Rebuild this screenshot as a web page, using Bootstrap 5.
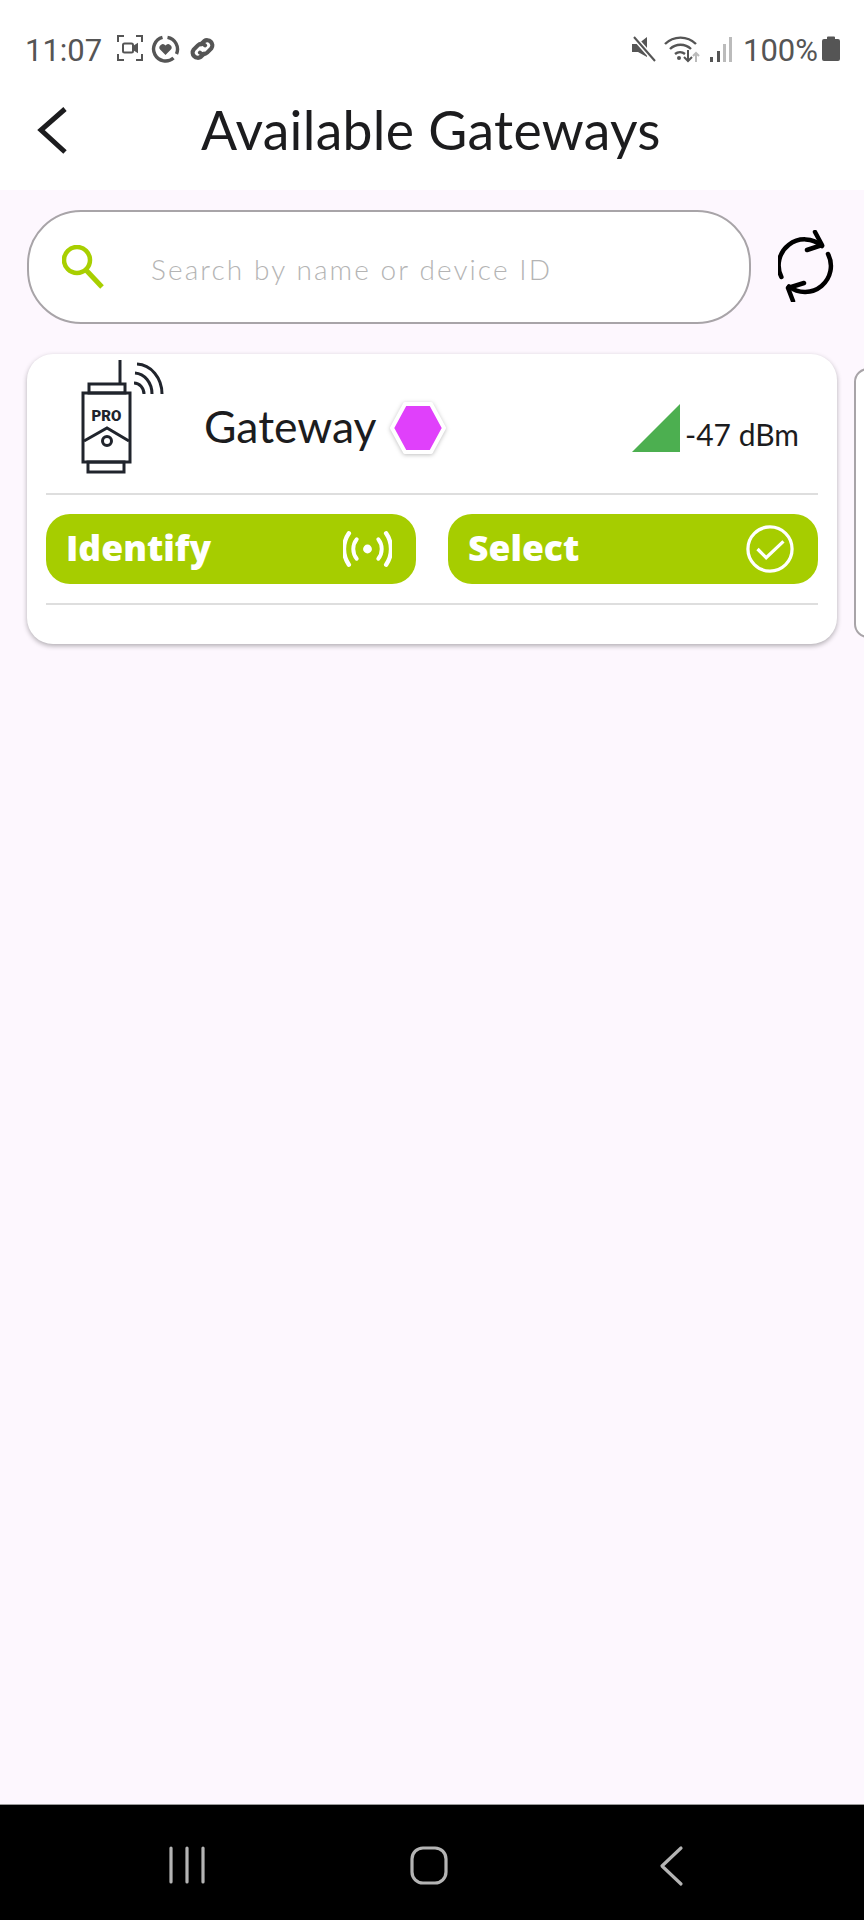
<!DOCTYPE html>
<html lang="en">
<head>
  <meta charset="UTF-8">
  <meta name="viewport" content="width=device-width, initial-scale=1.0">
  <title>Available Gateways</title>
  <link href="https://cdn.jsdelivr.net/npm/bootstrap@5.3.0/dist/css/bootstrap.min.css" rel="stylesheet">
  <style>
    html, body {
      height: 100%;
    }
    body {
      width: 864px;
      height: 1920px;
      overflow: hidden;
      background: #fdf7fe;
      font-family: "Lato", sans-serif;
      color: #1c1c1e;
    }
    .status-row {
      height: 76px;
      padding: 35px 24px 0 25px;
      font-family: "Roboto", sans-serif;
      font-size: 31px;
      color: #555;
      line-height: 1;
    }
    .title-row {
      height: 114px;
    }
    .title-text {
      font-size: 53.5px;
      font-weight: 400;
      margin: -8px 0 0 133px;
      letter-spacing: 0.3px;
    }
    .back-icon {
      margin-left: 36px;
      margin-top: -4px;
    }
    .search-row {
      padding: 20px 26px 0 27px;
    }
    .search-box {
      width: 724px;
      height: 114px;
      border: 2px solid #a8a4a8;
      border-radius: 54px;
      padding-left: 33px;
    }
    .search-input {
      border: 0;
      background: transparent;
      padding: 0;
      margin: 4px 0 0 47px;
      font-size: 28px;
      font-weight: 300;
      letter-spacing: 2.1px;
      box-shadow: none !important;
    }
    .search-input::placeholder {
      color: #b4b4b4;
      opacity: 1;
    }
    .refresh-icon {
      margin-top: -3px;
    }
    .card-strip {
      padding: 30px 0 12px 27px;
      overflow: hidden;
      gap: 17px;
    }
    .gw-card {
      flex: 0 0 810px;
      height: 290px;
      border: 0;
      border-radius: 26px;
      box-shadow: 0 2px 5px rgba(0, 0, 0, 0.3);
      padding: 0 19px;
    }
    .next-card {
      flex: 0 0 810px;
      height: 270px;
      margin-top: 14px;
      border: 2px solid #a8a4a8;
      border-radius: 14px;
    }
    .gw-top {
      height: 141px;
      border-bottom: 2px solid #dedede;
    }
    .gw-name {
      font-size: 44.5px;
      margin-left: 38px;
      margin-top: 6px;
    }
    .gw-hex {
      margin-left: 13px;
      margin-top: 8px;
      filter: drop-shadow(0 1px 2px rgba(0, 0, 0, 0.25));
    }
    .rssi-text {
      font-size: 30px;
      margin-left: 5px;
      margin-right: 19px;
      line-height: 1;
      padding-bottom: 3px;
    }
    .rssi-wrap {
      margin-top: 9px;
    }
    .gw-actions {
      height: 110px;
      border-bottom: 2px solid #dedede;
      gap: 32px;
    }
    .gw-btn {
      height: 70px;
      flex: 1 1 0;
      background: #a6cd00;
      border: 0;
      border-radius: 24px;
      color: #fff;
      font-family: "Open Sans", sans-serif;
      font-weight: 800;
      font-size: 35.5px;
      padding: 0 24px 0 20px;
      line-height: 1;
    }
    .gw-btn span {
      padding-bottom: 2px;
    }
    .gw-btn:hover, .gw-btn:active {
      background: #a6cd00 !important;
      color: #fff !important;
    }
    .sys-nav {
      height: 116px;
      background: #000;
      border-top: 1px solid #9a9a9a;
      margin-top: auto;
    }
  </style>
</head>
<body class="d-flex flex-column">

  <div class="status-row d-flex align-items-start bg-white">
    <span>11:07</span>
    <svg style="margin-left:15px" width="26" height="26" viewBox="0 0 26 26" fill="none" stroke="#555" stroke-width="2">
      <path d="M1 7V1h6M19 1h6v6M25 19v6h-6M7 25H1v-6"/>
      <rect x="6" y="8.5" width="10" height="9" rx="1.5"/>
      <path d="M16 12l4-2.5v7L16 14" fill="#555"/>
    </svg>
    <svg style="margin-left:8px" width="29" height="28" viewBox="0 0 28 28" fill="none" stroke="#555" stroke-width="3.4">
      <path d="M16 2.4A12 12 0 0 1 25 19M22 23A12 12 0 1 1 11 2.4"/>
      <path d="M14 20l-5.4-5.4a3.3 3.3 0 0 1 5.4-4 3.3 3.3 0 0 1 5.4 4z" fill="#555" stroke="none"/>
    </svg>
    <svg class="ms-2" width="29" height="28" viewBox="0 0 27 27" fill="none" stroke="#555" stroke-width="4" stroke-linecap="round">
      <path d="M12 9l3-3a5 5 0 0 1 7 7l-4 4a5 5 0 0 1-7 0"/>
      <path d="M15 18l-3 3a5 5 0 0 1-7-7l4-4a5 5 0 0 1 7 0"/>
    </svg>
    <svg class="ms-auto" width="26" height="28" viewBox="0 0 26 28">
      <path d="M1 9h6l9-7v20l-9-5H1z" fill="#555"/>
      <path d="M3 2l21 24" stroke="#fff" stroke-width="5"/>
      <path d="M3 2l21 24" stroke="#555" stroke-width="2"/>
    </svg>
    <svg style="margin-left:7px" width="36" height="28" viewBox="0 0 36 28" fill="none" stroke="#555" stroke-width="2.4">
      <path d="M1 9a22 22 0 0 1 31 0M6 14a15 15 0 0 1 21 0M11 19a8 8 0 0 1 10 0"/>
      <circle cx="15" cy="23" r="2" fill="#555" stroke="none"/>
      <path d="M24 15v11M20 22l4 4 4-4" stroke-width="2"/>
      <path d="M32 27V18M29 21l3-3 3 3" stroke="#bbb" stroke-width="2"/>
    </svg>
    <svg style="margin-left:9px" width="24" height="28" viewBox="0 0 24 28">
      <rect x="1" y="22" width="3" height="5" fill="#555"/>
      <rect x="8" y="16" width="3" height="11" fill="#555"/>
      <rect x="14" y="9" width="3" height="18" fill="#bbb"/>
      <rect x="20" y="2" width="3" height="25" fill="#bbb"/>
    </svg>
    <span style="margin-left:10px">100%</span>
    <svg class="ms-1" width="18" height="26" viewBox="0 0 18 26">
      <path d="M5 2.5a1 1 0 0 1 1-1h6a1 1 0 0 1 1 1V4h3a2 2 0 0 1 2 2v18a2 2 0 0 1-2 2H2a2 2 0 0 1-2-2V6a2 2 0 0 1 2-2h3z" fill="#555"/>
    </svg>
  </div>

  <div class="title-row d-flex align-items-center bg-white">
    <svg class="back-icon" width="32" height="48" viewBox="0 0 32 48" fill="none" stroke="#1c1c1e" stroke-width="5">
      <path d="M29 2L5 23l24 22"/>
    </svg>
    <h1 class="title-text">Available Gateways</h1>
  </div>

  <div class="search-row d-flex align-items-center">
    <div class="search-box d-flex align-items-center bg-white">
      <svg class="flex-shrink-0" width="42" height="44" viewBox="0 0 42 44" fill="none" stroke="#a8cf00" stroke-width="4.5">
        <circle cx="15" cy="15" r="13"/>
        <path d="M24 25l16 17" stroke-width="5"/>
      </svg>
      <input class="form-control search-input" type="text" placeholder="Search by name or device ID">
    </div>
    <svg class="refresh-icon ms-auto" width="60" height="72" viewBox="0 0 60 72" fill="none" stroke="#000" stroke-width="4.5" stroke-linecap="round" stroke-linejoin="round">
      <path d="M3.4 47A26 26 0 0 1 44 16"/>
      <path d="M37 2l7 13-15 5"/>
      <path d="M50 24A26 26 0 0 1 11 56.5"/>
      <path d="M26 53l-16 5 5 13"/>
    </svg>
  </div>

  <div class="card-strip d-flex">
    <div class="card gw-card">
      <div class="gw-top d-flex align-items-center">
        <svg width="120" height="124" viewBox="46 354 120 124" fill="none" stroke="#20242c" stroke-width="3" class="flex-shrink-0" style="margin-top:-14px">
          <path d="M120 359v24"/>
          <rect x="89" y="383" width="36" height="9"/>
          <rect x="83" y="392" width="47" height="69"/>
          <rect x="88" y="461" width="36" height="10"/>
          <path d="M84 440l23-13 22 13"/>
          <circle cx="107" cy="440" r="4.5"/>
          <path d="M137 363a26 30 0 0 1 25 30M135 372a18 21 0 0 1 17 21M134 382a10 11 0 0 1 10 11"/>
          <text x="106.5" y="420" text-anchor="middle" fill="#20242c" stroke="none" font-family="Roboto, sans-serif" font-weight="900" font-size="15">PRO</text>
        </svg>
        <span class="gw-name">Gateway</span>
        <svg class="gw-hex" width="56" height="52" viewBox="0 0 56 52">
          <path d="M15 2h26l13 24-13 24H15L2 26z" fill="#e040fb" stroke="#fff" stroke-width="4" stroke-linejoin="round"/>
        </svg>
        <div class="rssi-wrap ms-auto d-flex align-items-end">
          <svg width="48" height="48" viewBox="0 0 48 48"><path d="M0 48L48 0v48z" fill="#4caf50"/></svg>
          <span class="rssi-text">-47 dBm</span>
        </div>
      </div>
      <div class="gw-actions d-flex align-items-center">
        <button class="btn gw-btn d-flex align-items-center justify-content-between" type="button">
          <span>Identify</span>
          <svg width="49" height="36" viewBox="0 0 50 36" fill="none" stroke="#fff" stroke-width="4" stroke-linecap="round">
            <circle cx="25" cy="18" r="4.5" fill="#fff" stroke="none"/>
            <path d="M14 8a16 16 0 0 0 0 20M36 8a16 16 0 0 1 0 20"/>
            <path d="M6 2a28 28 0 0 0 0 32M44 2a28 28 0 0 1 0 32" stroke-width="4.5"/>
          </svg>
        </button>
        <button class="btn gw-btn d-flex align-items-center justify-content-between" type="button">
          <span>Select</span>
          <svg width="48" height="48" viewBox="0 0 50 50" fill="none" stroke="#fff" stroke-width="3.4">
            <circle cx="25" cy="25" r="23"/>
            <path d="M12 25l9 9 18-17"/>
          </svg>
        </button>
      </div>
    </div>
    <div class="card next-card"></div>
  </div>

  <div class="sys-nav d-flex flex-shrink-0">
    <svg width="864" height="116" viewBox="0 1804 864 116" fill="none" stroke="#b4b4b4" stroke-width="3.2" stroke-linecap="round" stroke-linejoin="round">
      <path d="M171 1847v34M187 1847v34M203 1847v34"/>
      <rect x="412" y="1847" width="34" height="35" rx="11"/>
      <path d="M681 1847l-19 18 19 18"/>
    </svg>
  </div>

</body>
</html>
